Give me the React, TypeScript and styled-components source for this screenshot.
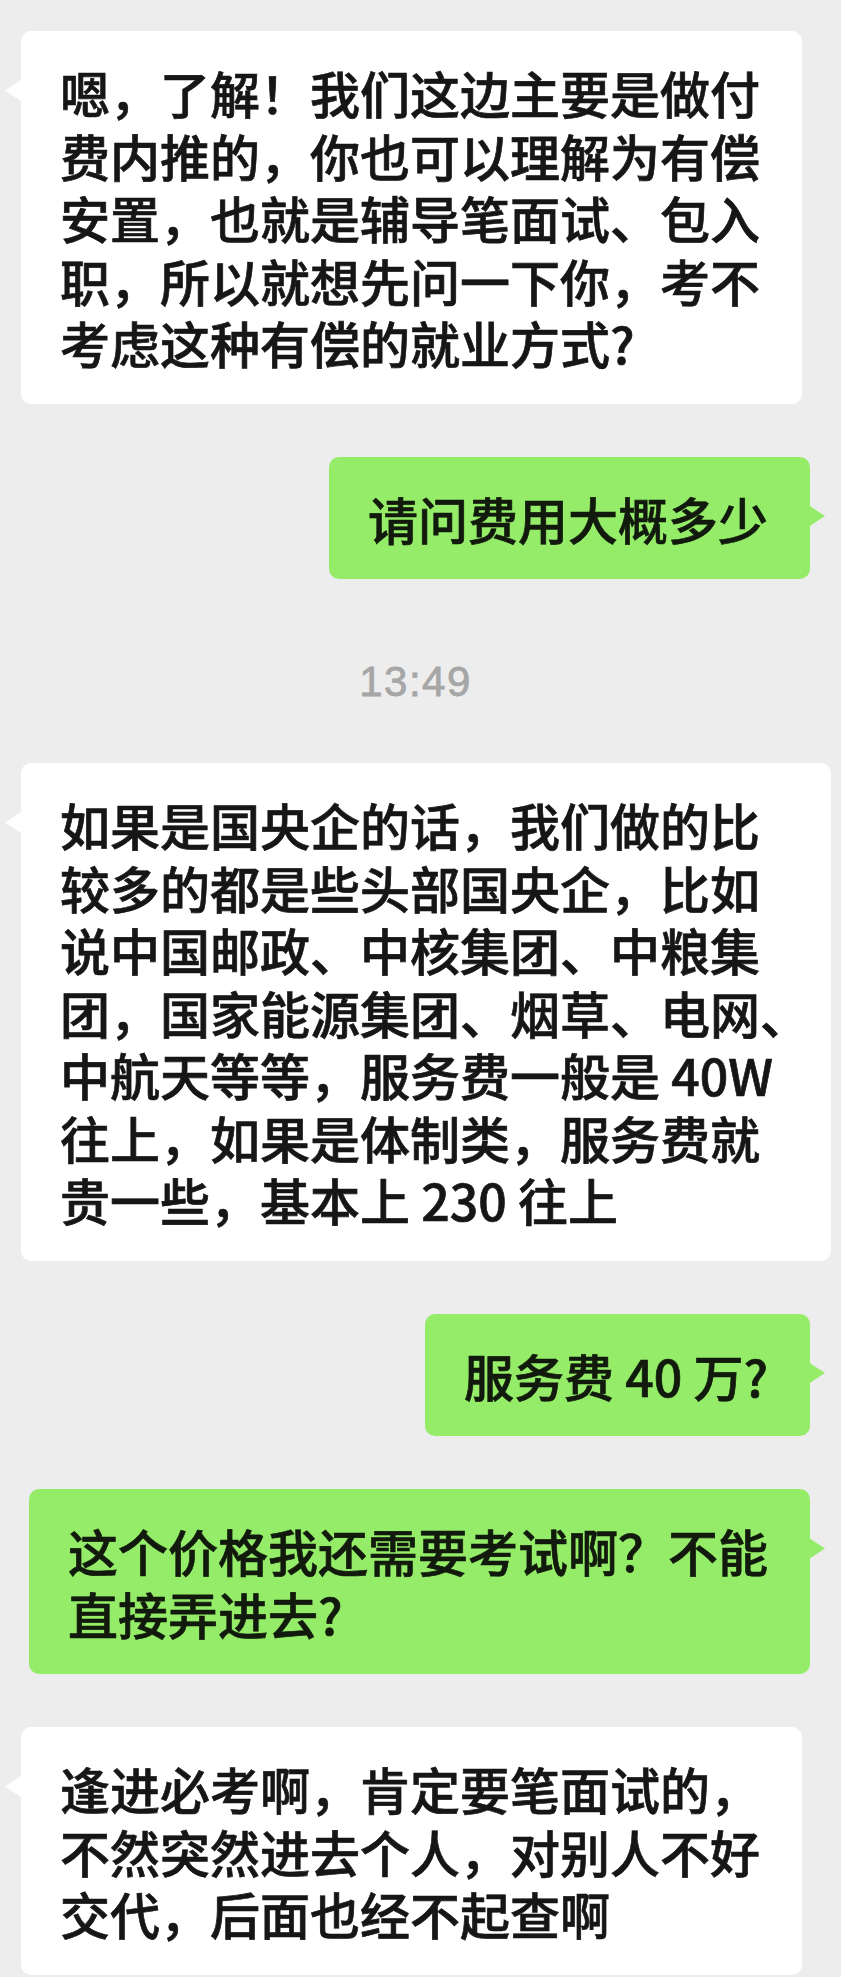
import React from "react";
import styled, { createGlobalStyle, css } from "styled-components";

const GlobalStyle = createGlobalStyle`
  html, body {
    margin: 0;
    padding: 0;
    background: #ededed;
  }
  body {
    font-family: "Noto Sans CJK SC", "Noto Sans", sans-serif;
    -webkit-font-smoothing: antialiased;
  }
`;

type Side = "in" | "out";

interface Message {
  kind: "msg";
  side: Side;
  lines: string[];
  width?: number;
}

interface TimeMark {
  kind: "time";
  text: string;
}

const chat: (Message | TimeMark)[] = [
  {
    kind: "msg",
    side: "in",
    lines: [
      "嗯，了解！我们这边主要是做付",
      "费内推的，你也可以理解为有偿",
      "安置，也就是辅导笔面试、包入",
      "职，所以就想先问一下你，考不",
      "考虑这种有偿的就业方式?",
    ],
  },
  { kind: "msg", side: "out", lines: ["请问费用大概多少"] },
  { kind: "time", text: "13:49" },
  {
    kind: "msg",
    side: "in",
    width: 810,
    lines: [
      "如果是国央企的话，我们做的比",
      "较多的都是些头部国央企，比如",
      "说中国邮政、中核集团、中粮集",
      "团，国家能源集团、烟草、电网、",
      "中航天等等，服务费一般是 40W",
      "往上，如果是体制类，服务费就",
      "贵一些，基本上 230 往上",
    ],
  },
  { kind: "msg", side: "out", lines: ["服务费 40 万?"] },
  {
    kind: "msg",
    side: "out",
    lines: ["这个价格我还需要考试啊？不能", "直接弄进去?"],
  },
  {
    kind: "msg",
    side: "in",
    lines: [
      "逢进必考啊，肯定要笔面试的，",
      "不然突然进去个人，对别人不好",
      "交代，后面也经不起查啊",
    ],
  },
];

const Page = styled.div`
  display: flex;
  flex-direction: column;
  gap: 53px;
  padding: 31px 31px 0 21px;
  min-height: 1977px;
  box-sizing: border-box;
`;

const Row = styled.div<{ $side: Side }>`
  display: flex;
  justify-content: ${(p) => (p.$side === "out" ? "flex-end" : "flex-start")};
`;

const Bubble = styled.div<{ $side: Side; $width?: number }>`
  position: relative;
  box-sizing: border-box;
  ${(p) => p.$width && `width: ${p.$width}px;`}
  padding: 30px 42px 30px 39px;
  border-radius: 10px;
  color: ${(p) => (p.$side === "out" ? "#111a0c" : "#161616")};
  font-size: 50px;
  line-height: 62.5px;
  font-weight: 500;
  -webkit-text-stroke: 0.7px currentColor;
  background: ${(p) => (p.$side === "out" ? "#95ec69" : "#ffffff")};

  &::before {
    content: "";
    position: absolute;
    top: 49px;
    width: 16px;
    height: 21px;
    background: inherit;
    ${(p) =>
      p.$side === "out"
        ? css`
            right: -15px;
            clip-path: polygon(0 0, 100% 50%, 0 100%);
          `
        : css`
            left: -16px;
            clip-path: polygon(0 50%, 100% 0, 100% 100%);
          `}
  }
`;

const Line = styled.div`
  white-space: nowrap;
`;

const Stamp = styled.div`
  padding-top: 22px;
  height: 56px;
  line-height: 56px;
  text-align: center;
  font-family: "Liberation Sans", Arial, sans-serif;
  font-size: 42px;
  letter-spacing: 1.5px;
  color: #a6a6a6;
  -webkit-text-stroke: 0.8px currentColor;
`;

export default function App() {
  return (
    <>
      <GlobalStyle />
      <Page>
        {chat.map((item, i) =>
          item.kind === "time" ? (
            <Stamp key={i}>{item.text}</Stamp>
          ) : (
            <Row key={i} $side={item.side}>
              <Bubble $side={item.side} $width={item.width}>
                {item.lines.map((line, j) => (
                  <Line key={j}>{line}</Line>
                ))}
              </Bubble>
            </Row>
          )
        )}
      </Page>
    </>
  );
}
